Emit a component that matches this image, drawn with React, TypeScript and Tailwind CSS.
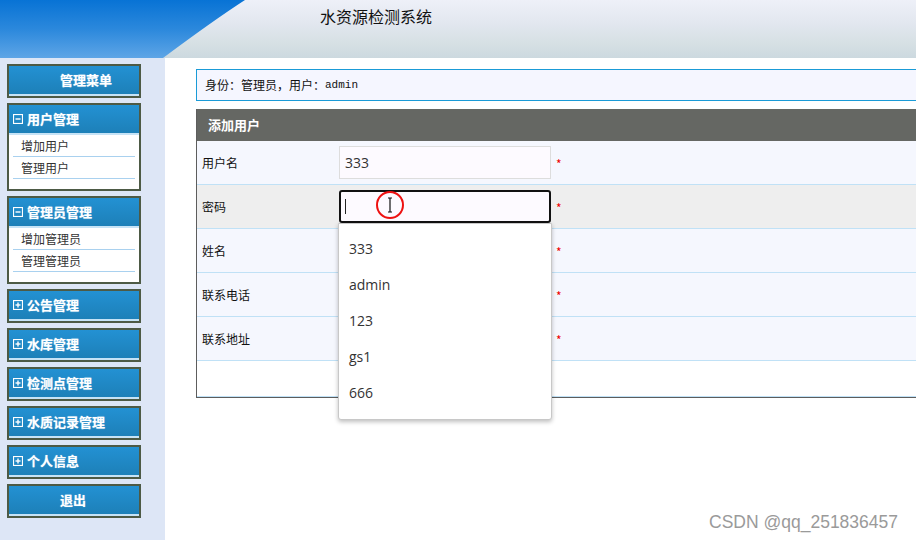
import React from "react";

const cn = '"Noto Sans CJK SC", "Liberation Sans", sans-serif';

function BoxIcon({open}: {open: boolean}) {
    return (
        <svg width="10" height="10" viewBox="0 0 10 10" className="shrink-0">
            <rect x="0.5" y="0.5" width="9" height="9" fill="none" stroke="white" strokeWidth="1.2"/>
            <path d="M2.5 5H7.5" stroke="white" strokeWidth="1.4"/>
            {!open && <path d="M5 2.5V7.5" stroke="white" strokeWidth="1.4"/>}
        </svg>
    );
}

function MenuHead({label, icon, open}: {label: string; icon: boolean; open?: boolean}) {
    return (
        <div
            className={"h-[30px] flex items-center gap-[4px] border-b-2 border-[#c6e3f6] bg-[linear-gradient(#2391d3,#1d80b8)] text-white font-bold text-[13px] " + (icon ? "pl-[4px]" : "pl-[51px]")}
            style={{textShadow: "0 0 1px rgba(255,255,255,0.6)"}}>
            {icon && <BoxIcon open={!!open}/>}
            <span>{label}</span>
        </div>
    );
}

function MenuBlock({label, icon = true, items}: {label: string; icon?: boolean; items?: string[]}) {
    return (
        <div className="border-2 border-[#4d5a45] bg-white">
            <MenuHead label={label} icon={icon} open={!!items}/>
            {items && (
                <div className="px-[4px] pb-[10px]">
                    {items.map(i => (
                        <div key={i} className="h-[22px] flex items-center pl-[8px] border-b border-[#a9d1ef] text-[12px] text-[#333]">
                            {i}
                        </div>
                    ))}
                </div>
            )}
        </div>
    );
}

function Row({label, bg, children}: {label: string; bg: string; children?: React.ReactNode}) {
    return (
        <div className={"h-[44px] flex items-center border-b border-[#c0e1f6] relative " + bg}>
            <div className="w-[142px] pl-[5px] text-[12px] text-[#111]">{label}</div>
            {children}
        </div>
    );
}

const Star = () => <span className="ml-[5px] text-[#e00] text-[12px] mt-[2px]">*</span>;

export default function App() {
    const suggestions = ['333', 'admin', '123', 'gs1', '666'];
    return (
        <div className="w-[916px] h-[540px] overflow-hidden bg-white flex flex-col" style={{fontFamily: cn}}>
            <div className="h-[58px] shrink-0 flex items-center bg-[linear-gradient(#eef0f8,#e2e7ef_40%,#d6e0e4_75%,#ccd9df)]">
                <svg width="250" height="58" viewBox="0 0 250 58" className="shrink-0">
                    <defs>
                        <linearGradient id="hb" x1="0" y1="0" x2="0" y2="1">
                            <stop offset="0" stopColor="#0873d5"/>
                            <stop offset="0.5" stopColor="#2b88dc"/>
                            <stop offset="1" stopColor="#5ea5e6"/>
                        </linearGradient>
                    </defs>
                    <path d="M0 0H245Q214 20 163 58H0Z" fill="url(#hb)"/>
                </svg>
                <div className="ml-[70px] -mt-[26px] text-[16px] text-[#111]">水资源检测系统</div>
            </div>
            <div className="flex flex-1">
                <div className="w-[165px] shrink-0 bg-[#dde6f6] pt-[6px] px-[7px] pr-[24px] flex flex-col gap-[5px]">
                    <MenuBlock label="管理菜单" icon={false}/>
                    <MenuBlock label="用户管理" items={['增加用户', '管理用户']}/>
                    <MenuBlock label="管理员管理" items={['增加管理员', '管理管理员']}/>
                    <MenuBlock label="公告管理"/>
                    <MenuBlock label="水库管理"/>
                    <MenuBlock label="检测点管理"/>
                    <MenuBlock label="水质记录管理"/>
                    <MenuBlock label="个人信息"/>
                    <MenuBlock label="退出" icon={false}/>
                </div>
                <div className="pl-[31px] pt-[11px] w-[800px] shrink-0">
                    <div className="h-[32px] border border-[#1a9bd7] bg-[#f5f6ff] flex items-center pl-[8px] text-[12px] text-[#111]">
                        身份：管理员，用户：<span style={{fontFamily: '"Liberation Mono", "DejaVu Sans Mono", monospace'}} className="text-[11px]">admin</span>
                    </div>
                    <div className="mt-[8px] border-l border-b border-[#5d5d5d]">
                        <div className="h-[32px] bg-[#656763] flex items-center pl-[11px] text-white font-bold text-[13px]">添加用户</div>
                        <Row label="用户名" bg="bg-[#f5f7fe]">
                            <div className="w-[212px] h-[33px] border border-[#ddd] bg-[#fdfaff] flex items-center pl-[5px] text-[14px] text-[#333]" style={{fontFamily: '"Open Sans", "Noto Sans", sans-serif'}}>333</div>
                            <Star/>
                        </Row>
                        <Row label="密码" bg="bg-[#eeeeee]">
                            <div className="w-[212px] h-[33px] border-2 border-[#111] rounded-[3px] bg-[#fdfaff] flex items-center pl-[4px] relative">
                                <div className="w-[1px] h-[15px] bg-[#222]"/>
                                <svg width="32" height="32" viewBox="0 0 32 32" className="absolute left-[33px] top-[-2px]">
                                    <circle cx="16" cy="15" r="13" fill="none" stroke="#ee1111" strokeWidth="2"/>
                                    <path d="M14 8H18M16 8V22M14 22H18" stroke="#111" strokeWidth="1.2" fill="none"/>
                                </svg>
                            </div>
                            <Star/>
                            <div className="absolute left-[141px] top-[38px] w-[214px] bg-white border border-[#c8c8c8] rounded-b-[3px] shadow-[0_2px_4px_rgba(0,0,0,0.25)] pt-[6px] pb-[9px] z-10" style={{fontFamily: '"Open Sans", "Noto Sans", sans-serif'}}>
                                {suggestions.map(s => (
                                    <div key={s} className="h-[36px] flex items-center pl-[10px] text-[14px] text-[#333]">{s}</div>
                                ))}
                            </div>
                        </Row>
                        <Row label="姓名" bg="bg-[#f5f7fe]"><div className="w-[212px]"/><Star/></Row>
                        <Row label="联系电话" bg="bg-[#f5f7fe]"><div className="w-[212px]"/><Star/></Row>
                        <Row label="联系地址" bg="bg-[#f5f7fe]"><div className="w-[212px]"/><Star/></Row>
                        <div className="h-[36px] bg-white border-b border-[#c0e1f6]"/>
                    </div>
                    <div className="mt-[116px] ml-[513px] text-[17.5px] text-[#9a9a9a] leading-none" style={{fontFamily: '"Liberation Sans", Arial, sans-serif'}}>
                        CSDN @qq_251836457
                    </div>
                </div>
            </div>
        </div>
    );
}
